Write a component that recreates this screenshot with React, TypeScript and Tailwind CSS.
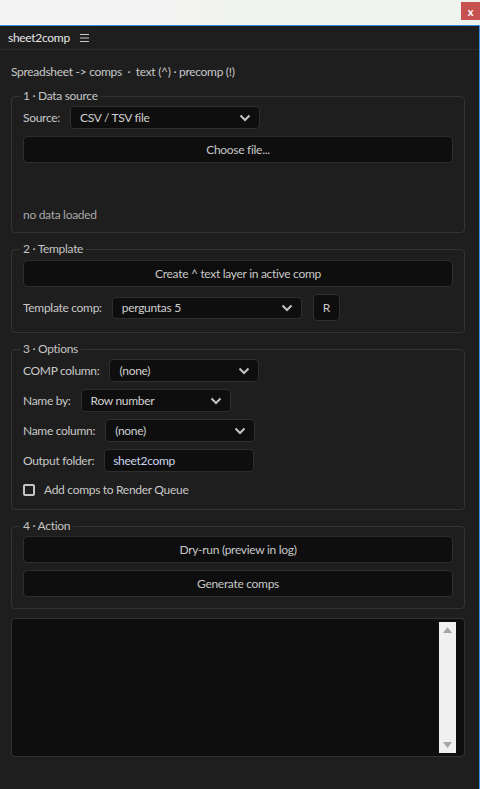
import React, { useState } from 'react';

const Chevron = () => (
  <svg width="12" height="8" viewBox="0 0 12 8" className="shrink-0">
    <path d="M1.5 1.5 L6 6 L10.5 1.5" fill="none" stroke="#c4c4c4" strokeWidth="2" />
  </svg>
);

const Select: React.FC<{ value: string; width: string; height?: string }> = ({ value, width, height }) => (
  <div
    className={`flex items-center justify-between rounded-[4px] border border-[#2e2e2e] bg-[#0e0e0e] pl-[9px] pr-[8px] text-[#d0d0d0] ${width} ${height ?? 'h-[23px]'}`}
  >
    <span>{value}</span>
    <Chevron />
  </div>
);

const Button: React.FC<{ children: React.ReactNode }> = ({ children }) => (
  <button className="h-[27px] w-full rounded-[4px] border border-[#2e2e2e] bg-[#0e0e0e] text-[#c8c8c8]">
    {children}
  </button>
);

const Section: React.FC<{ title: string; pb?: string; children: React.ReactNode }> = ({ title, pb, children }) => (
  <fieldset className={`rounded-[4px] border border-[#343434] px-[11px] pt-[3px] ${pb ?? 'pb-[10px]'}`}>
    <legend className="-ml-[3px] px-[3px] leading-[14px] text-[#c4c4c4]">{title}</legend>
    <div className="flex flex-col gap-[7px]">{children}</div>
  </fieldset>
);

const Row: React.FC<{ label: string; children: React.ReactNode }> = ({ label, children }) => (
  <div className="flex items-center gap-[10px]">
    <span className="text-[#c8c8c8]">{label}</span>
    {children}
  </div>
);

export default function App() {
  const [queue, setQueue] = useState(false);

  return (
    <div className="flex h-[789px] w-[480px] flex-col overflow-hidden bg-[#1e1e1e] text-[12px] tracking-[-0.3px] font-['Lato',sans-serif]">
      <div className="flex h-[25px] shrink-0 items-start justify-end bg-gradient-to-r from-[#f4f4f4] to-[#eff3ee] pt-[2px]">
        <button className="flex h-[18px] w-[19px] items-center justify-center bg-[#c75151] text-[11px] font-bold leading-none text-white">
          x
        </button>
      </div>

      <div className="flex flex-1 flex-col border-r border-t border-[#3a8ee2]">
        <div className="flex h-[24px] shrink-0 items-center gap-[10px] border-b border-[#2c2c2c] pl-[8px]">
          <span className="text-[#e6e6e6]">sheet2comp</span>
          <svg width="9" height="8" viewBox="0 0 9 8">
            <path d="M0 0.5 H9 M0 4 H9 M0 7.5 H9" stroke="#c8c8c8" strokeWidth="1" />
          </svg>
        </div>

        <div className="flex flex-col gap-[9px] pl-[11px] pr-[14px] pt-[15px]">
          <p className="mb-[1px] leading-[14px] text-[#c8c8c8]">
            Spreadsheet -&gt; comps &nbsp;·&nbsp; text (^) · precomp (!)
          </p>

          <Section title="1 · Data source">
            <Row label="Source:">
              <Select value="CSV / TSV file" width="w-[190px]" />
            </Row>
            <Button>Choose file...</Button>
            <div className="h-[31px]" />
            <p className="leading-[14px] text-[#a8a8a8]">no data loaded</p>
          </Section>

          <Section title="2 · Template" pb="pb-[11px]">
            <div className="mt-[1px]">
              <Button>Create ^ text layer in active comp</Button>
            </div>
            <div className="flex items-center gap-[11px]">
              <Row label="Template comp:">
                <Select value="perguntas 5" width="w-[190px]" height="h-[22px]" />
              </Row>
              <button className="h-[27px] w-[27px] rounded-[4px] border border-[#2e2e2e] bg-[#0e0e0e] text-[#c8c8c8]">
                R
              </button>
            </div>
          </Section>

          <Section title="3 · Options">
            <Row label="COMP column:">
              <Select value="(none)" width="w-[150px]" />
            </Row>
            <Row label="Name by:">
              <Select value="Row number" width="w-[150px]" />
            </Row>
            <Row label="Name column:">
              <Select value="(none)" width="w-[150px]" />
            </Row>
            <Row label="Output folder:">
              <input
                defaultValue="sheet2comp"
                className="h-[23px] w-[150px] rounded-[4px] border border-[#2e2e2e] bg-[#0e0e0e] px-[8px] text-[#c9d6ec] outline-none"
              />
            </Row>
            <label className="mt-[2px] flex h-[18px] items-center gap-[9px] text-[#c8c8c8]">
              <input
                type="checkbox"
                checked={queue}
                onChange={(e) => setQueue(e.target.checked)}
                className="h-[12px] w-[12px] appearance-none rounded-[2px] border-2 border-[#c4c4c4] bg-transparent"
              />
              Add comps to Render Queue
            </label>
          </Section>

          <Section title="4 · Action" pb="pb-[11px]">
            <Button>Dry-run (preview in log)</Button>
            <Button>Generate comps</Button>
          </Section>

          <div className="flex h-[139px] justify-end rounded-[4px] border border-[#333333] bg-[#0e0e0e] py-[3px] pr-[8px]">
            <div className="flex w-[17px] flex-col items-center justify-between bg-[#f0f0f0] py-[5px]">
              <svg width="9" height="6" viewBox="0 0 9 6">
                <path d="M4.5 0 L9 6 H0 Z" fill="#a6a6a6" />
              </svg>
              <svg width="9" height="6" viewBox="0 0 9 6">
                <path d="M0 0 H9 L4.5 6 Z" fill="#a6a6a6" />
              </svg>
            </div>
          </div>
        </div>
      </div>
    </div>
  );
}
